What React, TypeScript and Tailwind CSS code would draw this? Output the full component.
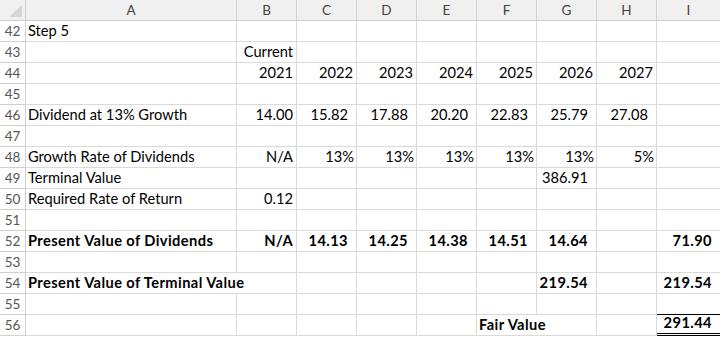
import React from "react";

type C = { t?: string; r?: boolean; p?: number; b?: boolean; span?: number; cls?: string };

const GRID = "grid grid-cols-[26px_211px_60px_60px_60px_60px_60px_60px_60px_64px]";

const years = ["2021", "2022", "2023", "2024", "2025", "2026", "2027"];

const E: C = {};

const rows: { n: number; cells: C[] }[] = [
  { n: 42, cells: [{ t: "Step 5" }, E, E, E, E, E, E, E, E] },
  { n: 43, cells: [E, { t: "Current", r: true, p: 3 }, E, E, E, E, E, E, E] },
  { n: 44, cells: [E, ...years.map((y) => ({ t: y, r: true, p: 3 })), E] },
  { n: 45, cells: [E, E, E, E, E, E, E, E, E] },
  {
    n: 46,
    cells: [
      { t: "Dividend at 13% Growth" },
      { t: "14.00", r: true, p: 3 },
      ...["15.82", "17.88", "20.20", "22.83", "25.79", "27.08"].map((v) => ({ t: v, r: true, p: 8 })),
      E,
    ],
  },
  { n: 47, cells: [E, E, E, E, E, E, E, E, E] },
  {
    n: 48,
    cells: [
      { t: "Growth Rate of Dividends" },
      { t: "N/A", r: true, p: 3 },
      ...["13%", "13%", "13%", "13%", "13%", "5%"].map((v) => ({ t: v, r: true, p: 2 })),
      E,
    ],
  },
  { n: 49, cells: [{ t: "Terminal Value" }, E, E, E, E, E, { t: "386.91", r: true, p: 8 }, E, E] },
  { n: 50, cells: [{ t: "Required Rate of Return" }, { t: "0.12", r: true, p: 3 }, E, E, E, E, E, E, E] },
  { n: 51, cells: [E, E, E, E, E, E, E, E, E] },
  {
    n: 52,
    cells: [
      { t: "Present Value of Dividends", b: true },
      { t: "N/A", r: true, p: 3, b: true },
      ...["14.13", "14.25", "14.38", "14.51", "14.64"].map((v) => ({ t: v, r: true, p: 8, b: true })),
      E,
      { t: "71.90", r: true, p: 8, b: true },
    ],
  },
  { n: 53, cells: [E, E, E, E, E, E, E, E, E] },
  {
    n: 54,
    cells: [
      { t: "Present Value of Terminal Value", b: true, span: 2 },
      E,
      E,
      E,
      E,
      { t: "219.54", r: true, p: 8, b: true },
      E,
      { t: "219.54", r: true, p: 8, b: true },
    ],
  },
  { n: 55, cells: [E, E, E, E, E, E, E, E, { cls: "border-b-black" }] },
  {
    n: 56,
    cells: [
      E,
      E,
      E,
      E,
      E,
      { t: "Fair Value", b: true, span: 2 },
      E,
      { t: "291.44", r: true, p: 8, b: true, cls: "border-b-[3px] border-double border-b-black" },
    ],
  },
];

const letters = ["A", "B", "C", "D", "E", "F", "G", "H", "I"];

function Cell({ c }: { c: C }) {
  const spanCls = c.span === 2 ? "col-span-2" : "";
  return (
    <div
      className={`h-[21px] border-r border-b border-[#dadada] flex items-end pb-[1px] whitespace-nowrap overflow-visible text-black ${
        c.r ? "justify-end" : "justify-start pl-[2px]"
      } ${c.b ? "font-bold tracking-[0.4px]" : ""} ${spanCls} ${c.cls ?? ""}`}
      style={c.r ? { paddingRight: c.p ?? 3 } : undefined}
    >
      {c.t ?? ""}
    </div>
  );
}

export default function App() {
  return (
    <div
      className="w-[720px] h-[338px] overflow-hidden bg-white"
      style={{ fontFamily: "Lato, 'Liberation Sans', sans-serif" }}
    >
      <div className="w-[721px] text-[14.67px] leading-[18px]">
        <div className={`${GRID} bg-[#f0f0f0]`}>
          <div className="h-[21px] border-r border-b border-[#d0d0d0] relative">
            <svg className="absolute left-[9px] top-[5px]" width="13" height="12" viewBox="0 0 13 12">
              <polygon points="13,0 13,12 0,12" fill="#d6d6d6" />
            </svg>
          </div>
          {letters.map((l) => (
            <div
              key={l}
              className="h-[21px] border-r border-b border-[#d0d0d0] flex items-center justify-center text-[13.5px] text-[#444]"
            >
              {l}
            </div>
          ))}
        </div>
        {rows.map((r) => (
          <div key={r.n} className={GRID}>
            <div className="h-[21px] border-r border-b border-[#d0d0d0] bg-white flex items-center justify-center text-[13.5px] text-[#555]">
              {r.n}
            </div>
            {r.cells.map((c, i) => (
              <Cell key={i} c={c} />
            ))}
          </div>
        ))}
      </div>
    </div>
  );
}
